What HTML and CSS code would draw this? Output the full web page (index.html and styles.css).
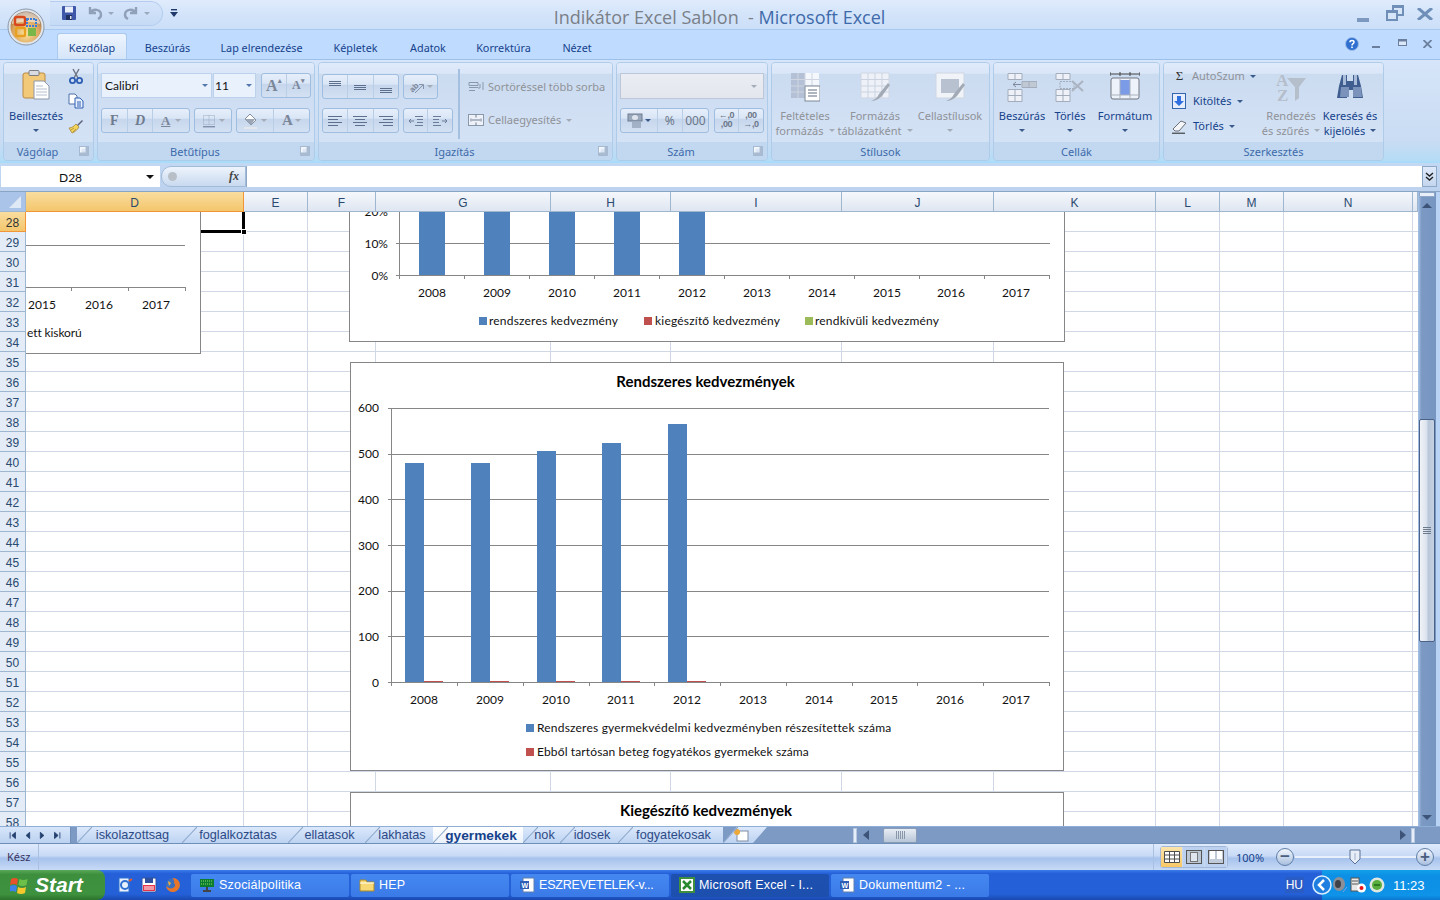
FILE: index.html
```html
<!DOCTYPE html>
<html lang="hu">
<head>
<meta charset="utf-8">
<title>Indikátor Excel Sablon - Microsoft Excel</title>
<link rel="stylesheet" href="styles.css">
</head>
<body>
<div class="app">

<header class="titlebar">
  <svg class="orb" viewBox="0 0 38 38"><defs><radialGradient id="orbg" cx="50%" cy="70%" r="65%"><stop offset="0" stop-color="#fbe6a0"/><stop offset=".7" stop-color="#d9a05a"/><stop offset="1" stop-color="#8f6a4a"/></radialGradient></defs><circle cx="19" cy="19" r="18" fill="#dfe6ee" stroke="#8a97a8"/><circle cx="19" cy="19" r="15.5" fill="url(#orbg)"/><path d="M5 16a14 12 0 0 1 28 0q-14-5-28 0z" fill="#fff" opacity=".55"/><rect x="8" y="9" width="10" height="8" rx="2" fill="none" stroke="#d8481c" stroke-width="2.4"/><rect x="20" y="11" width="9" height="7" fill="none" stroke="#3c7fd8" stroke-width="2" stroke-dasharray="2 1"/><rect x="9" y="20" width="9" height="8" rx="1" fill="none" stroke="#e8a020" stroke-width="2.4"/><rect x="21" y="20" width="8" height="8" fill="#7ab648"/></svg>
  <div class="qat">
    <svg class="i16" viewBox="0 0 16 16"><rect x="1" y="1" width="14" height="14" rx="1" fill="#3f57a8"/><rect x="4" y="1.5" width="8" height="6" fill="#e8eefa"/><rect x="5" y="10" width="6" height="5" fill="#20305f"/><rect x="9" y="11" width="1.5" height="3" fill="#dfe6f5"/></svg>
    <svg class="i16 undo" viewBox="0 0 16 16"><path d="M3 2v6h6M3 8c3-5 11-4 11 2 0 2-1 3-3 4" fill="none" stroke="#8fa0b8" stroke-width="2.4"/></svg>
    <i class="caret qc"></i>
    <svg class="i16 redo" viewBox="0 0 16 16"><path d="M13 2v6H7M13 8C10 3 2 4 2 10c0 2 1 3 3 4" fill="none" stroke="#8fa0b8" stroke-width="2.4"/></svg>
    <i class="caret qc"></i>
  </div>
  <svg class="qat-more" viewBox="0 0 8 8"><rect x="1" width="6" height="1.4" fill="#1f3a6b"/><path d="M0 3h8L4 8z" fill="#1f3a6b"/></svg>
  <h1 class="doc"><span class="doc-a">Indikátor Excel Sablon  - </span><span class="doc-b">Microsoft Excel</span></h1>
  <div class="winctl">
    <svg class="wmin" viewBox="0 0 12 4"><rect width="12" height="4" fill="#7d99bf"/></svg>
    <svg class="wres" viewBox="0 0 18 16"><rect x="6" y="0" width="12" height="11" fill="#6f8fb8"/><rect x="8" y="3" width="8" height="6" fill="#d6e5f8"/><rect x="0" y="5" width="12" height="11" fill="#6f8fb8"/><rect x="2" y="8" width="8" height="6" fill="#d6e5f8"/></svg>
    <svg class="wcls" viewBox="0 0 16 12"><path d="M1 0l14 12M15 0L1 12" stroke="#6f8fb8" stroke-width="3"/></svg>
  </div>
</header>

<nav class="tabs">
  <a class="tab tab-on">Kezdőlap</a>
  <a class="tab t1">Beszúrás</a>
  <a class="tab t2">Lap elrendezése</a>
  <a class="tab t3">Képletek</a>
  <a class="tab t4">Adatok</a>
  <a class="tab t5">Korrektúra</a>
  <a class="tab t6">Nézet</a>
  <div class="docctl">
    <svg class="dhelp" viewBox="0 0 14 14"><circle cx="7" cy="7" r="6.5" fill="#2f6fd0" stroke="#9dbce8"/><path d="M5 5.2C5 3 9 3 9 5.2 9 6.8 7 6.6 7 8.4" fill="none" stroke="#fff" stroke-width="1.5"/><rect x="6.2" y="9.5" width="1.6" height="1.6" fill="#fff"/></svg>
    <svg class="dmin" viewBox="0 0 8 2"><rect width="8" height="2" fill="#6b7f9c"/></svg>
    <svg class="dres" viewBox="0 0 9 7"><rect x=".5" y=".5" width="8" height="6" fill="#dbe8fa" stroke="#6b7f9c"/><rect x="1" y="1" width="7" height="1.5" fill="#6b7f9c"/></svg>
    <svg class="dcls" viewBox="0 0 9 8"><path d="M.5 0l8 8M8.5 0l-8 8" stroke="#6b7f9c" stroke-width="1.8"/></svg>
  </div>
</nav>

<section class="ribbon">

  <div class="group g-clip">
    <div class="gbody clip-body">
      <div class="big b-paste">
        <svg class="i30" viewBox="0 0 28 30"><rect x="1" y="3" width="22" height="25" rx="2" fill="#f2c879" stroke="#b98a45"/><rect x="7" y="0.5" width="10" height="5" rx="1" fill="#d8dce2" stroke="#7d7d7d"/><path d="M12 11h10l5 5v13H12z" fill="#fff" stroke="#8d98a8"/><path d="M14 16h7M14 19h11M14 22h11M14 25h11" stroke="#b6c0ce"/></svg>
        <span class="lbl">Beillesztés</span><i class="caret ca"></i>
      </div>
      <div class="tools">
        <svg class="i16" viewBox="0 0 16 16"><path d="M5 1l5 9M11 1l-5 9" stroke="#6e7684" stroke-width="1.5"/><circle cx="4.5" cy="12.5" r="2.6" fill="none" stroke="#2f5fb4" stroke-width="1.8"/><circle cx="11.5" cy="12.5" r="2.6" fill="none" stroke="#2f5fb4" stroke-width="1.8"/></svg>
        <svg class="i16" viewBox="0 0 16 16"><path d="M1 1h6l2 2v8H1z" fill="#fff" stroke="#4a6fa8"/><path d="M7 5h5l3 3v7H7z" fill="#e8f0fb" stroke="#2f5fb4"/><path d="M9 9h4M9 11h4M9 13h4" stroke="#2f5fb4"/></svg>
        <svg class="i16" viewBox="0 0 16 16"><path d="M9 7l5-5 1 1-5 5z" fill="#5a5f78"/><path d="M1 10c3 0 5-2 7-4l3 3c-2 3-4 5-7 6z" fill="#f2d35c" stroke="#a8893a" stroke-width=".8"/><path d="M3 12l3-2M5 14l3-3" stroke="#a8893a" stroke-width=".8"/></svg>
      </div>
    </div>
    <div class="gfoot has-launch"><span>Vágólap</span><i class="launch"></i></div>
  </div>

  <div class="group g-font">
    <div class="gbody font-body">
      <div class="row">
        <div class="combo c-font">Calibri<i class="caret cb"></i></div>
        <div class="combo c-size">11<i class="caret cb"></i></div>
        <div class="btns b-grow"><span class="bt">A<sup>▴</sup></span><span class="bt small">A<sup>▾</sup></span></div>
      </div>
      <div class="row">
        <div class="btns b-fmt"><span class="bt w26 serif">F</span><span class="bt w26 serif it">D</span><span class="bt w36 ulin">A<i class="caret cg"></i></span></div>
        <div class="btns b-bord"><span class="bt w38"><svg class="i16" viewBox="0 0 16 16"><path d="M2.5 2.5h11v9h-11zM8 2.5v9M2.5 7h11" fill="none" stroke="#9aaac0" stroke-dasharray="1 1"/><rect x="2" y="13" width="12" height="1.4" fill="#7f90aa"/></svg><i class="caret cg"></i></span></div>
        <div class="btns b-col"><span class="bt w38"><svg class="i16" viewBox="0 0 16 16"><path d="M7 1l6 6-5 5-6-6z" fill="#fff" stroke="#858f9e"/><path d="M2 6h10l-4 6z" fill="#9aa6b6"/><rect x="1" y="14" width="13" height="2" fill="#e4e8ee"/></svg><i class="caret cg"></i></span><span class="bt w36 fcol">A<i class="caret cg"></i></span></div>
      </div>
    </div>
    <div class="gfoot has-launch"><span>Betűtípus</span><i class="launch"></i></div>
  </div>

  <div class="group g-align">
    <div class="gbody align-body">
      <div class="acol">
        <div class="row">
          <div class="btns b-al">
            <span class="bt al"><svg class="i16" viewBox="0 0 16 16"><path d="M2 2.5h12M2 4.5h12M2 6.5h12" stroke="#5c6f8c"/></svg></span>
            <span class="bt al"><svg class="i16" viewBox="0 0 16 16"><path d="M2 6.5h12M2 8.5h12M2 10.5h12" stroke="#5c6f8c"/></svg></span>
            <span class="bt al"><svg class="i16" viewBox="0 0 16 16"><path d="M2 9.5h12M2 11.5h12M2 13.5h12" stroke="#5c6f8c"/></svg></span>
          </div>
          <div class="btns b-or"><span class="bt w35"><svg class="i16" viewBox="0 0 16 16"><text x="0" y="11" class="ab" transform="rotate(-45 5 8)">ab</text><path d="M6 14l8-8M10 5.500h4.500V10" fill="none" stroke="#8793a8"/></svg><i class="caret cg"></i></span></div>
        </div>
        <div class="row">
          <div class="btns b-al">
            <span class="bt al"><svg class="i16" viewBox="0 0 16 16"><path d="M1 3.5h14M1 6.5h10M1 9.5h14M1 12.5h10" stroke="#5c6f8c"/></svg></span>
            <span class="bt al"><svg class="i16" viewBox="0 0 16 16"><path d="M1 3.5h14M3 6.5h10M1 9.5h14M3 12.5h10" stroke="#5c6f8c"/></svg></span>
            <span class="bt al"><svg class="i16" viewBox="0 0 16 16"><path d="M1 3.5h14M5 6.5h10M1 9.5h14M5 12.5h10" stroke="#5c6f8c"/></svg></span>
          </div>
          <div class="btns b-ind">
            <span class="bt w25"><svg class="i16" viewBox="0 0 16 16"><path d="M7 3.5h8M9 6.5h6M9 9.5h6M7 12.5h8M6 8H1M3 6L1 8l2 2" fill="none" stroke="#6b7c98"/></svg></span>
            <span class="bt w25"><svg class="i16" viewBox="0 0 16 16"><path d="M1 3.5h8M1 6.5h6M1 9.5h6M1 12.5h8M10 8h5M13 6l2 2-2 2" fill="none" stroke="#6b7c98"/></svg></span>
          </div>
        </div>
      </div>
      <i class="vsep"></i>
      <div class="wrapcol">
        <div class="cmd off"><svg class="i16" viewBox="0 0 16 16"><path d="M1 3.5h9v3H1zM1 8.5h9M1 11.5h6M12 5v4h-2M15 3v8" fill="none" stroke="#8a98ac"/></svg><span>Sortöréssel több sorba</span></div>
        <div class="cmd off"><svg class="i16" viewBox="0 0 16 16"><rect x=".5" y="2.5" width="15" height="11" fill="#eef2f8" stroke="#8a98ac"/><path d="M4 8h8M3 6.5v3M13 6.5v3M8 2.500v3M8 10.500v3" stroke="#6d7c92"/></svg><span>Cellaegyesítés</span><i class="caret cg ml1"></i></div>
      </div>
    </div>
    <div class="gfoot has-launch"><span>Igazítás</span><i class="launch"></i></div>
  </div>

  <div class="group g-num">
    <div class="gbody num-body">
      <div class="combo c-num"><i class="caret cg"></i></div>
      <div class="row">
        <div class="btns b-nf"><span class="bt w38"><svg class="i16" viewBox="0 0 16 16"><rect x="1" y="1" width="14" height="7" fill="#9aa8bc" stroke="#6e7c92"/><ellipse cx="8" cy="4.5" rx="3" ry="2.5" fill="#dfe5ee"/><path d="M5 10h9M5 12h9M5 14h9" stroke="#7a889e"/></svg><i class="caret cn"></i></span><span class="bt w26 gtx">%</span><span class="bt w26 gtx">000</span></div>
        <div class="btns b-dec"><span class="bt w25 dec">←,0<br>,00</span><span class="bt w25 dec">,00<br>→,0</span></div>
      </div>
    </div>
    <div class="gfoot has-launch"><span>Szám</span><i class="launch"></i></div>
  </div>

  <div class="group g-style">
    <div class="gbody big-row">
      <div class="big off w66">
        <svg class="i30" viewBox="0 0 30 30"><path d="M1 1h28v25H1z" fill="#f4f7fb"/><path d="M1 1h14v25H1z" fill="#b4c0d6"/><path d="M1 7.5h28M1 14h28M1 20h28M8 1v25M15 1v25M22 1v25" stroke="#cfd6e2"/><rect x="15" y="14" width="15" height="15" fill="#fff" stroke="#7d8898"/><path d="M18 18h9M18 21h9M18 24h9" stroke="#5f6c80"/></svg>
        <span class="lbl">Feltételes</span><span class="lbl">formázás<i class="caret cg ml4"></i></span>
      </div>
      <div class="big off w74">
        <svg class="i30" viewBox="0 0 30 30"><path d="M1 1h28v25H1z" fill="#eef2f8" stroke="#cfd6e2"/><path d="M1 7.5h28M1 14h28M1 20h28M8 1v25M15 1v25M22 1v25" stroke="#cbd3e0"/><path d="M11 29c3-1 6-3 8-7l9-11 2 2-8 11c-3 3-7 5-11 5z" fill="#a2aab6"/></svg>
        <span class="lbl">Formázás</span><span class="lbl">táblázatként<i class="caret cg ml4"></i></span>
      </div>
      <div class="big off w76">
        <svg class="i30" viewBox="0 0 30 30"><rect x="1" y="1" width="28" height="25" fill="#f0f3f8" stroke="#cfd6e2"/><rect x="6" y="7" width="18" height="14" fill="#b7c1d0"/><path d="M11 29c3-1 6-3 8-7l9-11 2 2-8 11c-3 3-7 5-11 5z" fill="#a2aab6"/></svg>
        <span class="lbl">Cellastílusok</span><i class="caret cg up"></i>
      </div>
    </div>
    <div class="gfoot"><span>Stílusok</span></div>
  </div>

  <div class="group g-cells">
    <div class="gbody big-row">
      <div class="big w56">
        <svg class="i30" viewBox="0 0 30 30"><path d="M1 1.5h14v6H1zM8 1.5v6M1 17.5h14v6H1zM1 23.5h14v6H1zM8 17.5v12" fill="#eef2f8" stroke="#a3adbc"/><path d="M15 9.5h15v6H15zM22 9.5v6" fill="#c0c8d4" stroke="#a3adbc"/><path d="M14 12.5H6M9 10l-3 2.5L9 15" fill="none" stroke="#7f8a9c"/></svg>
        <span class="lbl dark">Beszúrás</span><i class="caret ca"></i>
      </div>
      <div class="big w40">
        <svg class="i30" viewBox="0 0 30 30"><path d="M1 1.5h14v6H1zM8 1.5v6M1 17.5h14v6H1zM1 23.5h14v6H1zM8 17.5v12" fill="#eef2f8" stroke="#a3adbc"/><path d="M5 9.5h14v7H5z" fill="none" stroke="#a3adbc" stroke-dasharray="2 1"/><path d="M17 9l11 10M28 9L17 19" stroke="#aab3c0" stroke-width="2"/></svg>
        <span class="lbl dark">Törlés</span><i class="caret ca"></i>
      </div>
      <div class="big w70">
        <svg class="i30" viewBox="0 0 30 30"><path d="M0 2h30" stroke="#444"/><path d="M0 0v4M30 0v4M10 0v4M20 0v4" stroke="#444"/><rect x="1" y="6" width="28" height="21" rx="2" fill="#eef2fa" stroke="#6e7480"/><rect x="10" y="8" width="10" height="15" fill="#7b9be6"/><path d="M1 23h28M10 6v21M20 6v21" stroke="#aab1bd"/></svg>
        <span class="lbl dark">Formátum</span><i class="caret ca"></i>
      </div>
    </div>
    <div class="gfoot"><span>Cellák</span></div>
  </div>

  <div class="group g-edit">
    <div class="gbody edit-body">
      <div class="elist">
        <div class="cmd"><b class="sigma">Σ</b><span class="off-t">AutoSzum</span><i class="caret ca"></i></div>
        <div class="cmd"><svg class="i16" viewBox="0 0 16 16"><rect x=".5" y=".5" width="13" height="15" fill="#e6eefb" stroke="#3565ad"/><path d="M5 3h4v5h3l-5 5-5-5h3z" fill="#2f6fe0"/></svg><span class="dark">Kitöltés</span><i class="caret ca"></i></div>
        <div class="cmd"><svg class="i16" viewBox="0 0 16 16"><path d="M1 11l8-8 5 2-7 8H3z" fill="#f4f6fa" stroke="#6d6f78"/><path d="M0 15.2h13" stroke="#222"/></svg><span class="dark">Törlés</span><i class="caret ca"></i></div>
      </div>
      <div class="big off w60">
        <svg class="i30" viewBox="0 0 30 30"><text x="0" y="14" class="az">A</text><text x="1" y="29" class="az">Z</text><path d="M11 6h19l-7 9v11l-4 3V15z" fill="#b5becb"/></svg>
        <span class="lbl">Rendezés</span><span class="lbl">és szűrés<i class="caret cg ml4"></i></span>
      </div>
      <div class="big w58">
        <svg class="i30" viewBox="0 0 30 30"><path d="M4 14l3-11h5v6h6V3h5l3 11 2 12H18v-8h-6v8H2z" fill="#3f5d8e"/><path d="M6 15h8v10H5zM18 15h8l1 10h-9z" fill="#7b93bb"/><path d="M8 3h3v10H8zM19 3h3v10h-3z" fill="#a8bbd8"/></svg>
        <span class="lbl dark">Keresés és</span><span class="lbl dark">kijelölés<i class="caret ca ml4"></i></span>
      </div>
    </div>
    <div class="gfoot"><span>Szerkesztés</span></div>
  </div>

</section>

<div class="formula">
  <div class="namebox"><span>D28</span><i class="caret cblk"></i></div>
  <div class="fxbox"><i class="knob"></i><em>fx</em></div>
  <div class="finput"></div>
  <div class="fexpand"><svg viewBox="0 0 9 9"><path d="M1 1l3.5 3L8 1M1 5l3.5 3L8 5" fill="none" stroke="#222" stroke-width="1.4"/></svg></div>
</div>

<div class="sheet">
  <div class="colheads">
    <div class="corner"><i></i></div>
    <div class="ch ch-on">D</div><div class="ch">E</div><div class="ch">F</div><div class="ch">G</div><div class="ch">H</div><div class="ch">I</div><div class="ch">J</div><div class="ch">K</div><div class="ch">L</div><div class="ch">M</div><div class="ch">N</div><div class="ch"></div>
    <div class="ch-sb"><i class="sb-split"></i><i class="tri-up"></i></div>
  </div>
  <div class="sheetmain">
    <div class="rowheads">
      <div class="rh rh-on">28</div><div class="rh">29</div><div class="rh">30</div><div class="rh">31</div><div class="rh">32</div><div class="rh">33</div><div class="rh">34</div><div class="rh">35</div><div class="rh">36</div><div class="rh">37</div><div class="rh">38</div><div class="rh">39</div><div class="rh">40</div><div class="rh">41</div><div class="rh">42</div><div class="rh">43</div><div class="rh">44</div><div class="rh">45</div><div class="rh">46</div><div class="rh">47</div><div class="rh">48</div><div class="rh">49</div><div class="rh">50</div><div class="rh">51</div><div class="rh">52</div><div class="rh">53</div><div class="rh">54</div><div class="rh">55</div><div class="rh">56</div><div class="rh">57</div><div class="rh">58</div>
    </div>
    <div class="cells">
      <div class="gridcols"><i></i><i></i><i></i><i></i><i></i><i></i><i></i><i></i><i></i><i></i><i></i><i></i></div>
      <div class="selbox"><i></i></div>

      <div class="chart chart-a">
        <svg viewBox="-273 113 473 240" width="473" height="240">
          <path class="ln" d="M-273 245.5H185M-273 287.5H185M71.500 287v4M128.500 287v4M185.500 287v4"/>
          <text x="42" y="309" class="ct m">2015</text><text x="99" y="309" class="ct m">2016</text><text x="156" y="309" class="ct m">2017</text>
          <text x="27" y="337" class="ct lg0">ett kiskorú</text>
        </svg>
      </div>

      <div class="chart chart-b">
        <svg viewBox="350 173 714 168" width="714" height="168">
          <path class="ln" d="M396 243.500H1050M396 275.500H1050M396 211.500H1050M399.500 173V279M464.500 275v4M529.500 275v4M594.500 275v4M659.500 275v4M724.500 275v4M789.500 275v4M854.500 275v4M919.500 275v4M984.500 275v4M1049.500 275v4"/>
          <rect class="bl" x="419" y="173" width="26" height="102"/><rect class="bl" x="484" y="173" width="26" height="102"/><rect class="bl" x="549" y="173" width="26" height="102"/><rect class="bl" x="614" y="173" width="26" height="102"/><rect class="bl" x="679" y="173" width="26" height="102"/>
          <text x="388" y="216" class="ct e">20%</text><text x="388" y="248" class="ct e">10%</text><text x="388" y="280" class="ct e">0%</text>
          <text x="432" y="297" class="ct m">2008</text><text x="497" y="297" class="ct m">2009</text><text x="562" y="297" class="ct m">2010</text><text x="627" y="297" class="ct m">2011</text><text x="692" y="297" class="ct m">2012</text><text x="757" y="297" class="ct m">2013</text><text x="822" y="297" class="ct m">2014</text><text x="887" y="297" class="ct m">2015</text><text x="951" y="297" class="ct m">2016</text><text x="1016" y="297" class="ct m">2017</text>
          <rect class="bl" x="479" y="317" width="8" height="8"/><text x="489" y="325" class="ct lg">rendszeres kedvezmény</text>
          <rect class="rd" x="644" y="317" width="8" height="8"/><text x="655" y="325" class="ct lg">kiegészítő kedvezmény</text>
          <rect class="gr" x="805" y="317" width="8" height="8"/><text x="815" y="325" class="ct lg">rendkívüli kedvezmény</text>
        </svg>
      </div>

      <div class="chart chart-c">
        <svg viewBox="351 363 712 407" width="712" height="407">
          <text x="705.500" y="387" class="ctitle">Rendszeres kedvezmények</text>
          <path class="ln" d="M388 408.500H1049M388 454.500H1049M388 499.500H1049M388 545.500H1049M388 591.500H1049M388 636.500H1049M388 682.500H1049M391.500 408V686M457.500 682v4M523.500 682v4M589.500 682v4M654.500 682v4M720.500 682v4M786.500 682v4M852.500 682v4M917.500 682v4M983.500 682v4M1049.500 682v4"/>
          <rect class="bl" x="405" y="463" width="19" height="219"/><rect class="bl" x="471" y="463" width="19" height="219"/><rect class="bl" x="537" y="451" width="19" height="231"/><rect class="bl" x="602" y="443" width="19" height="239"/><rect class="bl" x="668" y="424" width="19" height="258"/>
          <rect class="rd" x="424" y="681" width="19" height="1"/><rect class="rd" x="490" y="681" width="19" height="1"/><rect class="rd" x="556" y="681" width="19" height="1"/><rect class="rd" x="621" y="681" width="19" height="1"/><rect class="rd" x="687" y="681" width="19" height="1"/>
          <text x="379" y="412" class="ct e">600</text><text x="379" y="458" class="ct e">500</text><text x="379" y="504" class="ct e">400</text><text x="379" y="550" class="ct e">300</text><text x="379" y="595" class="ct e">200</text><text x="379" y="641" class="ct e">100</text><text x="379" y="687" class="ct e">0</text>
          <text x="424" y="704" class="ct m">2008</text><text x="490" y="704" class="ct m">2009</text><text x="556" y="704" class="ct m">2010</text><text x="621" y="704" class="ct m">2011</text><text x="687" y="704" class="ct m">2012</text><text x="753" y="704" class="ct m">2013</text><text x="819" y="704" class="ct m">2014</text><text x="884" y="704" class="ct m">2015</text><text x="950" y="704" class="ct m">2016</text><text x="1016" y="704" class="ct m">2017</text>
          <rect class="bl" x="526" y="724" width="8" height="8"/><text x="537" y="732" class="ct lg">Rendszeres gyermekvédelmi kedvezményben részesítettek száma</text>
          <rect class="rd" x="526" y="748" width="8" height="8"/><text x="537" y="756" class="ct lg1">Ebből tartósan beteg fogyatékos gyermekek száma</text>
        </svg>
      </div>

      <div class="chart chart-d">
        <svg viewBox="351 793 712 60" width="712" height="60">
          <text x="706" y="816" class="ctitle">Kiegészítő kedvezmények</text>
        </svg>
      </div>
    </div>
    <div class="vscroll">
      <div class="sb-thumb"><i></i></div>
      <i class="tri-down"></i>
    </div>
  </div>
</div>

<div class="sheetbar">
  <div class="sheetnav">
    <svg viewBox="0 0 70 18"><path d="M7 6v7M13 6l-4 3.500 4 3.500zM29 6l-4 3.500 4 3.500zM41 6l4 3.500-4 3.500zM57 6l4 3.500-4 3.500zM63 6v7" fill="#24406f" stroke="#24406f"/></svg>
  </div>
  <div class="stabs">
    <a class="stab s1">iskolazottsag</a>
    <a class="stab s2">foglalkoztatas</a>
    <a class="stab s3">ellatasok</a>
    <a class="stab s4">lakhatas</a>
    <a class="stab s5 stab-on">gyermekek</a>
    <a class="stab s6">nok</a>
    <a class="stab s7">idosek</a>
    <a class="stab s8">fogyatekosak</a>
    <a class="stab s9"><svg viewBox="0 0 16 14"><rect x="4" y="3" width="11" height="10" fill="#fff" stroke="#7f8da3"/><circle cx="4" cy="4" r="3" fill="#eda83a"/></svg></a>
  </div>
  <div class="hscroll">
    <i class="hsplit"></i><i class="tri-left"></i>
    <div class="hthumb"><svg viewBox="0 0 9 8"><path d="M.5 0v8M2.500 0v8M4.500 0v8M6.500 0v8M8.500 0v8" stroke="#8a97a8"/></svg></div>
    <i class="tri-right"></i><i class="hsplit h2"></i>
  </div>
</div>

<div class="status">
  <div class="st-ready">Kész</div>
  <div class="st-right">
    <div class="views">
      <span class="vw vw-on"><svg viewBox="0 0 16 12"><path d="M.5.500h15v11H.5zM.5 4h15M.5 8h15M5.500 0v12M10.500 0v12" fill="#fff" stroke="#4d4d4d"/></svg></span>
      <span class="vw"><svg viewBox="0 0 16 14"><rect x=".5" y=".5" width="15" height="13" fill="#bcc7d6" stroke="#555"/><rect x="4.500" y="2.500" width="7" height="9" fill="#dfe6f0" stroke="#777"/></svg></span>
      <span class="vw"><svg viewBox="0 0 16 14"><rect x=".5" y=".5" width="15" height="13" fill="#c0cad8" stroke="#555"/><rect x="2" y="1" width="5" height="8" fill="#fff"/><rect x="9" y="1" width="5" height="8" fill="#fff"/></svg></span>
    </div>
    <div class="zoomlvl">100%</div>
    <i class="zbtn">−</i>
    <div class="zslider"><svg viewBox="0 0 12 16"><path d="M1 1h10v9l-5 5-5-5z" fill="#e8eef8" stroke="#5b7196"/><path d="M6 4v7" stroke="#9fb0c8"/></svg></div>
    <i class="zbtn">+</i>
  </div>
</div>

<footer class="taskbar">
  <div class="start"><svg viewBox="0 0 18 18"><path d="M1 3q4-2 7 0l-1 6q-3-2-7 0z" fill="#e8522a"/><path d="M9.500 3q4 2 8 0l-1 6q-4 2-8 0z" fill="#6cc04a"/><path d="M0 10q3-2 7 0l-1 6q-4-2-7 0z" fill="#3c82e8"/><path d="M8 11q4 2 8 0l-1 6q-4 2-8 0z" fill="#f5c82e"/></svg><span>Start</span></div>
  <div class="quick">
    <svg viewBox="0 0 16 16"><path d="M2 1h10v14H2z" fill="#e8f2ff" stroke="#3070d0"/><circle cx="8" cy="8" r="4" fill="none" stroke="#3070d0" stroke-width="2"/><path d="M12 4l3-2" stroke="#e85a2a" stroke-width="2"/></svg>
    <svg viewBox="0 0 16 16"><rect x="1" y="1" width="14" height="14" rx="1" fill="#fff" stroke="#2f4f9f"/><rect x="4" y="1" width="8" height="5" fill="#2f4f9f"/><rect x="2" y="8" width="12" height="6" fill="#e6324a"/><path d="M3 10h10M3 12h10" stroke="#fff"/></svg>
    <svg viewBox="0 0 16 16"><circle cx="8" cy="8" r="7" fill="#3b6fc0"/><path d="M8 1a7 7 0 1 1-7 8c2 2 5 3 7 2s3-3 1-5c1-2-1-3-1-5z" fill="#e8762a"/><path d="M3 4l3 2-2 3z" fill="#f2b23a"/></svg>
  </div>
  <div class="tasks">
    <div class="task"><svg viewBox="0 0 16 16"><rect x="1" y="2" width="14" height="8" fill="#0c7c2f"/><path d="M2 4h12M2 7h12" stroke="#8fe06a" stroke-dasharray="1 1"/><path d="M8 10v3M4 14h8" stroke="#444" stroke-width="2"/></svg><span>Szociálpolitika</span></div>
    <div class="task"><svg viewBox="0 0 16 16"><path d="M1 3h6l1 2h7v9H1z" fill="#f6d875" stroke="#a88a2c"/><path d="M1 6h14" stroke="#fff"/></svg><span>HEP</span></div>
    <div class="task"><svg viewBox="0 0 16 16"><rect x="4" y="1" width="11" height="14" fill="#fff" stroke="#5f7fb0"/><rect x="1" y="4" width="9" height="8" fill="#2f5fb4"/><text x="2.500" y="10.500" class="wd">W</text></svg><span class="t-esz">ESZREVETELEK-v...</span></div>
    <div class="task task-on"><svg viewBox="0 0 16 16"><rect x="1" y="1" width="14" height="14" fill="#fff" stroke="#3f8f3c" stroke-width="2"/><path d="M4 4l8 8M12 4l-8 8" stroke="#2a8a2f" stroke-width="2.500"/></svg><span>Microsoft Excel - I...</span></div>
    <div class="task"><svg viewBox="0 0 16 16"><rect x="4" y="1" width="11" height="14" fill="#fff" stroke="#5f7fb0"/><rect x="1" y="4" width="9" height="8" fill="#2f5fb4"/><text x="2.500" y="10.500" class="wd">W</text></svg><span>Dokumentum2 - ...</span></div>
  </div>
  <div class="lang">HU</div>
  <div class="tray">
    <svg class="chev" viewBox="0 0 20 20"><circle cx="10" cy="10" r="9" fill="#1f7fe0" stroke="#d8efff" stroke-width="1.500"/><path d="M12 5l-5 5 5 5" fill="none" stroke="#fff" stroke-width="2.500"/></svg>
    <svg class="tr tr1" viewBox="0 0 16 16"><ellipse cx="7" cy="7" rx="6" ry="7" fill="#8a8f98"/><ellipse cx="6" cy="7" rx="3" ry="4" fill="#3e4148"/><path d="M11 15l4-5" stroke="#7fa4e0"/></svg>
    <svg class="tr tr2" viewBox="0 0 16 16"><rect x="1" y="1" width="8" height="13" fill="#e8e8e8" stroke="#555"/><path d="M2 4h6M2 7h6" stroke="#555"/><circle cx="11.500" cy="11" r="4.500" fill="#fff"/><circle cx="11.500" cy="11" r="2" fill="#e8101a"/></svg>
    <svg class="tr tr3" viewBox="0 0 16 16"><circle cx="8" cy="8" r="7.500" fill="#dfe8e0"/><circle cx="8" cy="8" r="5" fill="#59ad3d"/><rect x="5" y="7" width="6" height="2" fill="#2c7a22"/></svg>
    <span class="clock">11:23</span>
  </div>
</footer>

</div>
</body>
</html>
```

FILE: styles.css
```css
* { box-sizing: border-box; }
html, body { margin: 0; padding: 0; }
body { width: 1440px; height: 900px; overflow: hidden; font-family: "Noto Sans", "Open Sans", sans-serif; font-size: 11px; color: #15428b; }
i { display: block; font-style: normal; }
.app { display: flex; flex-direction: column; width: 1440px; height: 900px; background: #bfd5f0; position: relative; }
svg { display: block; flex: none; }
.i16 { width: 16px; height: 16px; }
.i30 { width: 30px; height: 30px; }

/* title bar */
.titlebar { height: 30px; display: flex; align-items: center; position: relative; background: linear-gradient(#e0ecfc 0, #d5e5fa 40%, #cbdff8 100%); border-bottom: 1px solid #a9c8ee; padding-left: 50px; }
.orb { position: absolute; left: 7px; top: 8px; width: 38px; height: 38px; z-index: 5; }
.qat { width: 113px; height: 25px; margin-top: -3px; display: flex; align-items: center; padding-left: 11px; border-radius: 0 13px 13px 0; background: linear-gradient(#d6e5fa, #c5daf5); border: 1px solid #b4cdee; border-left: 0; }
.undo { margin-left: 10px; }
.redo { margin-left: 9px; }
.qc { margin-left: 5px; }
.qat-more { width: 8px; height: 8px; margin-left: 7px; margin-top: -3px; }
.doc { flex: 1; margin: 4px 0 0; padding-right: 179px; text-align: center; font-weight: 400; font-size: 18px; font-family: "Open Sans", "Noto Sans", sans-serif; white-space: pre; }
.doc-a { color: #7a7f88; }
.doc-b { color: #3e6aaa; }
.winctl { position: absolute; right: 7px; top: 5px; display: flex; align-items: flex-start; }
.wmin { width: 12px; height: 4px; margin-top: 13px; }
.wres { width: 18px; height: 16px; margin-left: 17px; }
.wcls { width: 16px; height: 12px; margin-left: 13px; margin-top: 3px; }

/* ribbon tabs */
.tabs { height: 29px; display: flex; align-items: stretch; background: #bfdbff; padding: 3px 0 0 57px; font-size: 10.800px; }
.tab { display: flex; align-items: center; justify-content: center; white-space: nowrap; color: #15428b; padding-top: 2px; }
.tab-on { width: 70px; background: linear-gradient(#eef5fe, #d5e5f9); border: 1px solid #a9c9ee; border-bottom: 0; border-radius: 3px 3px 0 0; }
.t1 { width: 81px; }
.t2 { width: 107px; }
.t3 { width: 81px; }
.t4 { width: 64px; }
.t5 { width: 87px; }
.t6 { width: 60px; }
.docctl { margin-left: auto; display: flex; align-items: center; padding-bottom: 4px; }
.dhelp { width: 14px; height: 14px; }
.dmin { width: 8px; height: 2px; margin-left: 13px; margin-top: 6px; }
.dres { width: 9px; height: 7px; margin-left: 18px; margin-top: -3px; }
.dcls { width: 9px; height: 8px; margin-left: 16px; margin-right: 8px; }

/* ribbon */
.ribbon { height: 104px; display: flex; gap: 3px; padding: 2px 2px 0 3px; margin: 0; background: linear-gradient(#d6e5f9, #c9dcf3 80%, #b4dcf6); border: solid #9dc0e8; border-width: 1px 0 0; border-bottom: 2px solid #a8dcf8; }
.group { display: flex; flex-direction: column; border: 1px solid #aecbea; border-radius: 4px; height: 99px; overflow: hidden; }
.g-clip { width: 91px; } .g-font { width: 218px; } .g-align { width: 295px; } .g-num { width: 152px; } .g-style { width: 219px; } .g-cells { width: 167px; } .g-edit { width: 221px; }
.gbody { flex: 1; min-height: 0; display: flex; background: linear-gradient(#dfeafa 0, #dae7f8 13%, #cbdbf0 14%, #d4e2f5 100%); }
.gfoot { height: 18px; flex: none; display: flex; align-items: center; background: #c1d8f0; color: #3e6aaa; font-size: 11px; }
.gfoot span { flex: 1; text-align: center; }
.has-launch { padding-right: 3px; }
.has-launch span { margin-right: 2px; }
.launch { width: 12px; height: 12px; margin-left: 5px; background: linear-gradient(#e8f0fb, #d0def0); border: 1px solid #9fb2c8; box-shadow: inset -3px -3px 0 #a9bbd0, inset 2px 2px 0 #f4f8fd; transform: scale(.8); }
.big { display: flex; flex-direction: column; align-items: center; flex: none; padding-top: 9px; }
.big .i30 { margin-bottom: 6px; }
.lbl { display: flex; align-items: center; line-height: 15px; white-space: nowrap; font-size: 11px; color: #15428b; }
.off .lbl, .off-t { color: #8f9298; }
.dark, .lbl.dark { color: #15428b; }
.caret { width: 0; height: 0; flex: none; border: 3px solid transparent; border-top: 3px solid #4a6a9c; border-bottom: 0; }
.ca { border-top-color: #3a5a8c; }
.cg { border-top-color: #a4acb8; }
.cb { border-top-color: #5478ad; margin-left: auto; margin-right: 3px; }
.cn { border-top-color: #3a5a8c; margin-left: 5px; }
.qc { border-top-color: #9aa8bb; }
.big > .ca, .big > .up { margin-top: 6px; }
.ml1 { margin-left: 1px; }
.ml4 { margin-left: 5px; }

.clip-body { padding-left: 2px; }
.b-paste { width: 60px; padding-top: 7px; }
.b-paste .i30 { margin-bottom: 8px; }
.tools { display: flex; flex-direction: column; gap: 9px; padding: 5px 0 0 2px; }

.row { display: flex; gap: 4px; }
.font-body { flex-direction: column; gap: 10px; padding: 10px 0 0 3px; }
.font-body .row:first-child { gap: 1px; }
.combo { height: 25px; display: flex; align-items: center; background: #e9f1fc; border: 1px solid #bcd2ec; font-family: "Lato", sans-serif; font-size: 12px; color: #111; padding-left: 3px; }
.c-font { width: 111px; }
.c-size { width: 43px; padding-left: 1px; }
.btns { display: flex; height: 25px; border: 1px solid #9fbddf; border-radius: 3px; background: linear-gradient(#e6eefa 0, #dae6f6 40%, #c6d6ec 45%, #d4e1f3 100%); }
.bt { display: flex; align-items: center; justify-content: center; border-right: 1px solid #b8cde6; color: #7b8799; font-family: "Liberation Serif", serif; font-weight: 700; font-size: 15px; }
.bt:last-child { border-right: 0; }
.b-grow { width: 50px; margin-left: 4px; }
.b-grow .bt { flex: 1; font-size: 16px; }
.b-grow .small { font-size: 12px; }
.bt sup { font-size: 7px; line-height: 0; margin-top: -10px; }
.w25 { width: 25px; } .w26 { width: 26px; } .w35 { width: 35px; } .w36 { width: 36px; } .w38 { width: 38px; }
.b-fmt { width: 89px; }
.serif { font-size: 14px; color: #6f7b8e; }
.it { font-style: italic; }
.ulin { text-decoration: underline; font-size: 13px; gap: 5px; }
.fcol { font-size: 15px; gap: 3px; }
.b-bord { width: 38px; }
.b-bord .bt, .b-or .bt, .b-col .bt { gap: 2px; }
.b-col { width: 74px; }
.ab { font: 700 8px "Liberation Sans", sans-serif; fill: #7b8799; }

.align-body { padding: 11px 0 0 3px; }
.acol { display: flex; flex-direction: column; gap: 9px; }
.b-al { width: 77px; }
.al { flex: 1; }
.b-or { width: 35px; }
.b-ind { width: 50px; }
.vsep { width: 2px; height: 70px; margin: -5px 0 0 5px; background: #a4bfe0; }
.wrapcol { display: flex; flex-direction: column; gap: 17px; padding: 5px 0 0 8px; }
.cmd { display: flex; align-items: center; gap: 4px; height: 16px; white-space: nowrap; font-size: 11px; }
.cmd.off { color: #8f9298; }
.cmd > span { line-height: 16px; }

.num-body { flex-direction: column; gap: 9px; padding: 10px 0 0 3px; }
.c-num { width: 144px; height: 26px; background: linear-gradient(#eaeef4, #e3e7ed); border-color: #bcc8d8; justify-content: flex-end; padding-right: 6px; }
.b-nf { width: 89px; }
.b-dec { width: 50px; margin-left: 1px; }
.gtx { font-family: "Noto Sans", sans-serif; font-weight: 400; font-size: 12px; color: #6b7688; }
.w38 .caret.cn { margin-left: 2px; }
.dec { font-family: "Liberation Sans", sans-serif; font-size: 9px; line-height: 9px; font-weight: 700; color: #6b7688; text-align: center; display: block; padding-top: 2px; white-space: nowrap; letter-spacing: -.3px; }

.w40 { width: 40px; } .w56 { width: 56px; } .w58 { width: 58px; } .w60 { width: 60px; } .w66 { width: 66px; } .w70 { width: 70px; } .w74 { width: 74px; } .w76 { width: 76px; }
.edit-body { padding-left: 8px; }
.elist { width: 89px; display: flex; flex-direction: column; gap: 9px; padding-top: 5px; flex: none; }
.elist .cmd { gap: 5px; height: 16px; }
.sigma { width: 15px; text-align: center; font-weight: 400; font-size: 13px; color: #333; font-family: "Liberation Serif", serif; }
.az { font-family: "Liberation Serif", serif; font-weight: 700; font-size: 17px; fill: #b5becb; }

/* formula bar */
.formula { height: 28px; display: flex; padding: 3px 3px 3px 1px; background: linear-gradient(#c3d8f2, #bcd2ee); }
.namebox { width: 159px; height: 21px; background: #fff; display: flex; align-items: center; font-family: "Lato", sans-serif; font-size: 12px; color: #111; padding: 1px 0 0 58px; }
.caret.cblk { border-width: 4px; border-bottom: 0; border-top-color: #111; margin-left: auto; margin-right: 6px; }
.fxbox { width: 85px; height: 21px; margin-left: 1px; display: flex; align-items: center; justify-content: space-between; border-radius: 10px 0 0 10px; background: linear-gradient(#eef4fc, #c8d9ef); border: 1px solid #a2bbd9; padding: 0 6px 0 6px; }
.knob { width: 9px; height: 9px; border-radius: 50%; background: #b9bfc7; }
.fxbox em { font: italic 700 12px "Liberation Serif", serif; color: #444; }
.finput { flex: 1; height: 21px; background: #fff; border-left: 1px solid #8ea8c8; }
.fexpand { width: 15px; height: 21px; background: linear-gradient(#dfeafa, #c4d6ee); border: 1px solid #8ea8c8; display: flex; align-items: center; justify-content: center; }
.fexpand svg { width: 9px; height: 9px; }

/* sheet */
.sheet { --cols: 218px 64px 68px 175px 120px 171px 152px 162px 64px 64px 129px 5px; flex: 1; min-height: 0; display: flex; flex-direction: column; background: #b9d3f5; overflow: hidden; border-top: 1px solid #8aa4c6; padding-right: 4px; }
.colheads { height: 20px; flex: none; display: grid; grid-template-columns: 26px var(--cols) 18px; font-family: "Liberation Sans", sans-serif; font-size: 12px; color: #2a4a6f; }
.corner { background: #a9c4e8; border-right: 1px solid #9eb6ce; border-bottom: 1px solid #9eb6ce; display: flex; align-items: flex-end; justify-content: flex-end; padding: 0 4px 3px 0; }
.corner i { width: 0; height: 0; border-style: solid; border-width: 0 0 12px 12px; border-color: transparent transparent #dfe9f6 transparent; }
.ch { display: flex; align-items: center; justify-content: center; padding-top: 2px; background: linear-gradient(#f5f8fc, #dfe6f1); border-right: 1px solid #9eb6ce; border-bottom: 1px solid #9eb6ce; }
.ch-on { background: linear-gradient(#f9dd9f, #f4c66c); border-right-color: #f29536; border-bottom-color: #f29536; }
.ch-sb { display: flex; flex-direction: column; align-items: center; gap: 6px; background: linear-gradient(90deg, #a8c3e6, #7b99c3 20%, #7695c0); }
.sb-split { width: 16px; height: 5px; background: #e9eff8; border: 1px solid #8ea6c8; border-radius: 1px; flex: none; }
.tri-up { width: 0; height: 0; border: 5px solid transparent; border-top: 0; border-bottom: 5px solid #3d5478; flex: none; }
.sheetmain { flex: 1; min-height: 0; display: flex; overflow: hidden; }
.rowheads { width: 26px; flex: none; overflow: hidden; }
.rh { height: 20px; display: flex; align-items: center; justify-content: center; padding-top: 2px; background: #e4ecf7; border-right: 1px solid #9eb6ce; border-bottom: 1px solid #9eb6ce; font-family: "Liberation Sans", sans-serif; font-size: 12px; color: #2a4a6f; }
.rh-on { background: linear-gradient(#f9dd9f, #f4c66c); border-color: #f29536; color: #333; }
.cells { flex: none; width: 1392px; position: relative; overflow: hidden; background: #fff; }
.gridcols { display: grid; grid-template-columns: var(--cols); height: 100%; }
.gridcols i { border-right: 1px solid #d0d7e5; background: repeating-linear-gradient(transparent 0, transparent 19px, #d0d7e5 19px, #d0d7e5 20px); }
.gridcols i:last-child { border-right: 0; }
.selbox { position: absolute; left: 0; top: -3px; width: 219px; height: 24px; border: 3px solid #000; }
.selbox i { position: absolute; right: -5px; bottom: -5px; width: 6px; height: 6px; background: #000; border: 1px solid #fff; }
.chart { position: absolute; background: #fff; border: 1px solid #868686; overflow: hidden; }
.chart-a { left: -300px; top: -100px; width: 475px; height: 242px; }
.chart-b { left: 323px; top: -40px; width: 716px; height: 170px; }
.chart-c { left: 324px; top: 150px; width: 714px; height: 409px; }
.chart-d { left: 324px; top: 580px; width: 714px; height: 62px; }
.ln { fill: none; stroke: #868686; shape-rendering: crispEdges; }
.bl { fill: #4f81bd; shape-rendering: crispEdges; }
.rd { fill: #c0504d; shape-rendering: crispEdges; }
.gr { fill: #9bbb59; shape-rendering: crispEdges; }
.ct { font-family: "Lato", sans-serif; font-size: 12px; fill: #111; }
.lg { letter-spacing: .2px; }
.lg1 { letter-spacing: .13px; }
.lg0 { letter-spacing: -.1px; }
.m { text-anchor: middle; }
.e { text-anchor: end; }
.ctitle { font-family: "Lato", sans-serif; font-weight: 700; font-size: 15px; fill: #000; text-anchor: middle; }

/* vertical scrollbar */
.vscroll { width: 18px; flex: none; position: relative; background: linear-gradient(90deg, #a8c3e6, #7b99c3 20%, #7695c0); }
.tri-down { position: absolute; left: 4px; bottom: 6px; width: 0; height: 0; border: 5px solid transparent; border-bottom: 0; border-top: 5px solid #3d5478; }
.sb-thumb { position: absolute; left: 1px; top: 207px; width: 16px; height: 223px; border: 1px solid #4a6288; border-radius: 2px; background: linear-gradient(90deg, #f0f3f8, #dde4ee 45%, #b9c7da 60%, #c5d1e2); display: flex; align-items: center; justify-content: center; }
.sb-thumb i { width: 8px; height: 8px; background: repeating-linear-gradient(#6d7a8c 0, #6d7a8c 1px, transparent 1px, transparent 2px); }

/* sheet tabs */
.sheetbar { height: 18px; display: flex; background: #7d9ac4; border-top: 1px solid #8faed6; border-bottom: 1px solid #6f8fb8; }
.sheetnav { width: 71px; background: linear-gradient(#d6e5fa, #bcd2f0); border-right: 1px solid #6f8fb8; flex: none; }
.sheetnav svg { width: 70px; height: 16px; }
.stabs { display: flex; padding-left: 6px; width: 782px; flex: none; }
.stab { position: relative; display: flex; align-items: center; justify-content: center; padding-left: 6px; background: linear-gradient(#dbe8fb, #bdd3f2); white-space: nowrap; font-family: "Liberation Sans", sans-serif; font-size: 12.700px; color: #2c4a86; }
.stab::before { content: ""; position: absolute; left: 0; top: 0; width: 15px; height: 100%; background: linear-gradient(to bottom right, transparent calc(50% - 1px), #8aa6c8 50%, transparent calc(50% + 1px)); }
.stab-on { background: linear-gradient(#fff, #eaf1fb); font-weight: 700; color: #15428b; font-size: 13.700px; }
.s1 { width: 105px; } .s2 { width: 106px; } .s3 { width: 77px; } .s4 { width: 68px; } .s5 { width: 90px; } .s6 { width: 37px; } .s7 { width: 58px; } .s8 { width: 105px; } .s9 { width: 44px; clip-path: polygon(0 100%, 14px 0, 100% 0, 30px 100%); }
.s9 svg { width: 16px; height: 14px; margin-right: 14px; }
.hscroll { flex: 1; display: flex; align-items: center; background: #7d9ac4; }
.hsplit { width: 4px; height: 15px; background: #e6eef9; border: 1px solid #b8c8de; }
.tri-left { width: 0; height: 0; border: 5px solid transparent; border-left: 0; border-right: 6px solid #3d5478; margin-left: 6px; }
.hthumb { width: 34px; height: 15px; margin-left: 14px; background: linear-gradient(#e8edf4, #b8c6d8); border: 1px solid #8a9cb6; border-radius: 2px; display: flex; align-items: center; justify-content: center; }
.hthumb svg { width: 9px; height: 8px; }
.tri-right { width: 0; height: 0; border: 5px solid transparent; border-right: 0; border-left: 6px solid #3d5478; margin-left: 483px; }
.h2 { margin-left: 5px; }

/* status bar */
.status { height: 26px; display: flex; align-items: center; justify-content: space-between; background: linear-gradient(#dfeafc, #c8daf6 45%, #a7c2ec 55%, #c8dbf6 100%); font-family: "Noto Sans", sans-serif; }
.st-ready { width: 39px; height: 100%; display: flex; align-items: center; padding: 0 0 2px 7px; border-right: 1px solid #a9c0e2; color: #39345f; font-size: 11px; }
.st-right { display: flex; align-items: center; width: 287px; height: 100%; border-left: 1px solid #a9c0e2; padding-left: 6px; }
.views { width: 68px; height: 22px; display: flex; border: 1px solid #a1b8da; border-radius: 3px; background: #bcd0ef; }
.vw { flex: 1; display: flex; align-items: center; justify-content: center; border-right: 1px solid #c9d9f0; }
.vw svg { width: 16px; height: 14px; }
.vw-on { background: linear-gradient(#fbe3ab, #f8c866); }
.zoomlvl { width: 44px; margin-left: 8px; font-size: 11px; color: #15428b; }
.zbtn { width: 18px; height: 18px; border-radius: 50%; background: linear-gradient(#f2f6fc, #a9bfdf); border: 1px solid #5f7ea8; text-align: center; line-height: 15px; font-family: "Liberation Sans", sans-serif; font-size: 17px; font-weight: 700; color: #4a5f7f; flex: none; margin-left: -4px; }
.zslider { width: 125px; height: 16px; margin-left: 1px; padding-right: 6px; display: flex; justify-content: center; background: linear-gradient(transparent 7px, #e8f0fb 7px, #e8f0fb 9px, transparent 9px); }
.zslider svg { width: 12px; height: 16px; }

/* taskbar */
.taskbar { height: 30px; display: flex; align-items: center; background: linear-gradient(#3a7bea 0, #2560d8 12%, #2461d8 80%, #1a48b0 100%); color: #fff; font-family: "Liberation Sans", sans-serif; font-size: 12.500px; }
.start { width: 105px; height: 100%; display: flex; align-items: center; gap: 7px; padding-left: 10px; border-radius: 0 8px 8px 0; background: linear-gradient(#5aa85a 0, #3d8f3d 15%, #3e923e 80%, #2c722c 100%); }
.start svg { width: 18px; height: 18px; }
.start span { font: italic 700 21px "Liberation Sans", sans-serif; color: #fff; }
.quick { display: flex; gap: 8px; width: 86px; flex: none; padding-left: 12px; }
.quick svg { width: 16px; height: 16px; }
.tasks { display: flex; gap: 2px; }
.task { width: 158px; height: 23px; display: flex; align-items: center; gap: 4px; padding-left: 8px; background: linear-gradient(#4588f0, #3a7ae8); border-radius: 2px; white-space: nowrap; letter-spacing: .2px; }
.task svg { width: 16px; height: 16px; }
.task-on { background: linear-gradient(#1e50b0, #1d4fae); }
.t-esz { letter-spacing: -.2px; }
.lang { margin-left: auto; margin-right: 18px; padding: 0 1px; background: #2a5cc6; font-size: 12px; line-height: 16px; }
.tray { width: 118px; height: 100%; display: flex; align-items: center; background: linear-gradient(#12a0ea, #0c8fe4 20%, #0e93e8 85%, #0a78d0); }
.chev { width: 20px; height: 20px; margin-left: -10px; }
.tr { width: 16px; height: 16px; }
.tr2 { margin-left: 2px; }
.tr3 { margin-left: 3px; }
.clock { margin-left: 8px; font-size: 13px; }
.wd { font: 700 7px "Liberation Sans", sans-serif; fill: #fff; }
```
